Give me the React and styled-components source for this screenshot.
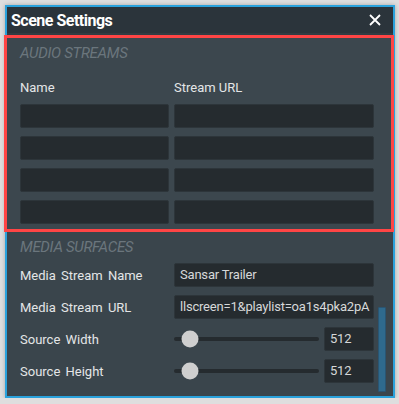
import React from "react";
import styled, { createGlobalStyle } from "styled-components";

const Global = createGlobalStyle`
  html, body {
    margin: 0;
    padding: 0;
    background: #dedede;
  }
  * {
    box-sizing: border-box;
  }
`;

const Page = styled.div`
  padding: 5px 4px 0 5px;
  font-family: Roboto, "Liberation Sans", sans-serif;
`;

const Window = styled.div`
  width: 390px;
  height: 393px;
  border: 2px solid #2aa2dc;
  background: #3a454c;
  box-shadow: 0 0 4px rgba(0, 0, 0, 0.25);
  display: flex;
  flex-direction: column;
  position: relative;
`;

const TitleBar = styled.div`
  height: 28px;
  flex-shrink: 0;
  background: #2b343b;
  display: flex;
  align-items: center;
  justify-content: space-between;
  padding: 0 12px 0 4px;
  border-bottom: 2px solid #323c43;
`;

const Title = styled.div`
  color: #ffffff;
  font-size: 16px;
  font-weight: 700;
  letter-spacing: -0.5px;
`;

const CloseButton = styled.button`
  border: none;
  background: none;
  padding: 0;
  width: 12px;
  height: 12px;
  display: flex;
  cursor: pointer;
`;

const Section = styled.section`
  position: relative;
  padding: ${(p) => p.$pad};
  background: ${(p) => (p.$highlight ? "#3c474e" : "transparent")};

  ${(p) =>
    p.$highlight &&
    `
    &::after {
      content: "";
      position: absolute;
      left: -3px;
      right: -1px;
      top: 0;
      bottom: 0;
      border: 3px solid #ff4545;
      pointer-events: none;
    }
  `}
`;

const Heading = styled.h2`
  margin: 0;
  font-size: 15px;
  font-weight: 400;
  font-style: italic;
  color: #6b767d;
  letter-spacing: -0.3px;
  line-height: 16px;
`;

const StreamGrid = styled.div`
  display: grid;
  grid-template-columns: 149px 200px;
  column-gap: 5px;
  row-gap: 8px;
  margin-top: ${(p) => p.$top}px;
`;

const ColumnLabel = styled.div`
  color: #e4e6e7;
  font-size: 13px;
  line-height: 16px;
`;

const Field = styled.div`
  height: 24px;
  background: #252b2f;
  border: 1px solid #2d353a;
  border-radius: 2px;
  color: #d6d8d9;
  font-size: 13px;
  line-height: 22px;
  padding: 0 5px;
  letter-spacing: -0.2px;
  white-space: nowrap;
  overflow: hidden;
  width: ${(p) => p.$w || "auto"};
`;

const PropGrid = styled.div`
  display: grid;
  grid-template-columns: 154px 200px;
  row-gap: 8px;
  margin-top: 8px;
  align-items: center;
`;

const PropLabel = styled.div`
  color: #e4e6e7;
  font-size: 13px;
  word-spacing: 2px;
`;

const SliderRow = styled.div`
  display: flex;
  align-items: center;
  gap: 5px;
`;

const Track = styled.div`
  position: relative;
  width: 145px;
  height: 4px;
  background: #252b2f;
  border-radius: 2px;
`;

const Thumb = styled.div`
  position: absolute;
  top: 50%;
  width: 17px;
  height: 17px;
  border-radius: 50%;
  background: #cfcfcf;
  transform: translate(-50%, -50%);
`;

const ScrollThumb = styled.div`
  position: absolute;
  right: 7px;
  top: 300px;
  width: 8px;
  height: 85px;
  background: #2f6a8d;
  border: 1px solid #2a5572;
  border-radius: 1px;
`;

const rows = [0, 1, 2, 3];

const Slider = ({ value, pos }) => (
  <SliderRow>
    <Track>
      <Thumb style={{ left: `${pos}px` }} />
    </Track>
    <Field $w="50px">{value}</Field>
  </SliderRow>
);

export default function App() {
  return (
    <Page>
      <Global />
      <Window>
        <TitleBar>
          <Title>Scene Settings</Title>
          <CloseButton aria-label="Close">
            <svg width="12" height="12" viewBox="0 0 12 12">
              <path d="M1 1 L11 11 M11 1 L1 11" stroke="#ffffff" strokeWidth="1.8" />
            </svg>
          </CloseButton>
        </TitleBar>

        <Section $highlight $pad="10px 19px 8px 13px">
          <Heading>AUDIO STREAMS</Heading>
          <StreamGrid $top={19}>
            <ColumnLabel>Name</ColumnLabel>
            <ColumnLabel>Stream URL</ColumnLabel>
            {rows.map((r) => (
              <React.Fragment key={r}>
                <Field />
                <Field />
              </React.Fragment>
            ))}
          </StreamGrid>
        </Section>

        <Section $pad="7px 19px 0 13px">
          <Heading>MEDIA SURFACES</Heading>
          <PropGrid>
            <PropLabel>Media Stream Name</PropLabel>
            <Field>Sansar Trailer</Field>
            <PropLabel>Media Stream URL</PropLabel>
            <Field>llscreen=1&amp;playlist=oa1s4pka2pA</Field>
            <PropLabel>Source Width</PropLabel>
            <Slider value="512" pos={16} />
            <PropLabel>Source Height</PropLabel>
            <Slider value="512" pos={16} />
          </PropGrid>
        </Section>

        <ScrollThumb />
      </Window>
    </Page>
  );
}
